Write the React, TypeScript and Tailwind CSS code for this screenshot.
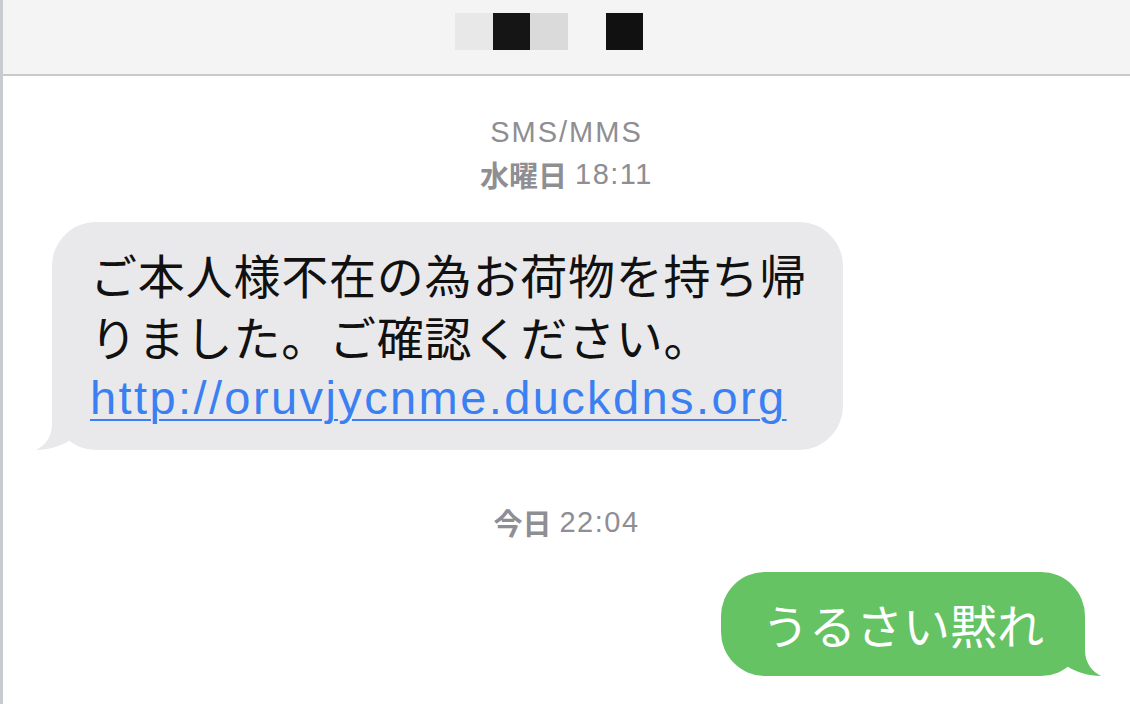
const jp = "font-['Noto_Sans_CJK_JP','Noto_Sans',sans-serif]";
const latin = "font-['Liberation_Sans','Noto_Sans_CJK_JP',sans-serif]";

const LeftTail = () => (
  <svg
    className="absolute left-[-16px] bottom-0"
    width="50"
    height="60"
    viewBox="0 0 50 60"
  >
    <path d="M16 0 L16 34 C16 48 8 56 0 60 C12 60 26 56 34 50 L34 0 Z" fill="#e9e9eb" />
  </svg>
);

const RightTail = () => (
  <svg
    className="absolute right-[-16px] bottom-0"
    width="50"
    height="60"
    viewBox="0 0 50 60"
  >
    <path d="M34 0 L34 34 C34 48 42 56 50 60 C38 60 24 56 16 50 L16 0 Z" fill="#65c363" />
  </svg>
);

const Stamp = ({ day, time }: { day: string; time: string }) => (
  <div className={`h-[42px] flex justify-center items-center gap-[8px] text-[29px] leading-[42px] text-[#8e8e93] ${latin}`}>
    <span className={`font-semibold ${jp}`}>{day}</span>
    <span className="tracking-[1.5px]">{time}</span>
  </div>
);

export default function App() {
  return (
    <div className="w-[1130px] h-[704px] overflow-hidden bg-white border-l-[3px] border-[#c8ccd1] flex flex-col">
      <header className="h-[76px] shrink-0 bg-[#f4f4f4] border-b-2 border-[#c9c9c9] flex items-start pl-[452px] pt-[13px]">
        <div className="w-[38px] h-[37px] bg-[#e8e8e8]" />
        <div className="w-[37px] h-[37px] bg-[#151515]" />
        <div className="w-[38px] h-[37px] bg-[#dadada]" />
        <div className="w-[37px] h-[37px] bg-[#111111] ml-[38px]" />
      </header>

      <div className="mt-[35px]">
        <div className={`h-[42px] text-center text-[29px] leading-[42px] text-[#8e8e93] tracking-[2px] ${latin}`}>
          SMS/MMS
        </div>
        <Stamp day="水曜日" time="18:11" />
      </div>

      <div className="mt-[27px] ml-[49px] relative w-[791px]">
        <LeftTail />
        <div className={`relative rounded-[44px] bg-[#e9e9eb] pl-[38px] py-[21px] text-[47px] leading-[62px] text-[#111111] ${latin}`}>
          <div className={`h-[62px] tracking-[0.8px] ${jp}`}>ご本人様不在の為お荷物を持ち帰</div>
          <div className={`h-[62px] tracking-[0.8px] ${jp}`}>りました。ご確認ください。</div>
          <div className="h-[62px]">
            <a
              href="#"
              className="text-[#3a80f2] underline decoration-[2px] underline-offset-[5px] tracking-[2.4px]"
            >
              http://oruvjycnme.duckdns.org
            </a>
          </div>
        </div>
      </div>

      <div className="mt-[51px]">
        <Stamp day="今日" time="22:04" />
      </div>

      <div className="mt-[29px] self-end mr-[45px] relative">
        <RightTail />
        <div className={`relative h-[104px] rounded-[44px] bg-[#65c363] px-[41px] py-[21px] text-[47px] leading-[62px] text-white ${jp}`}>
          うるさい黙れ
        </div>
      </div>
    </div>
  );
}
